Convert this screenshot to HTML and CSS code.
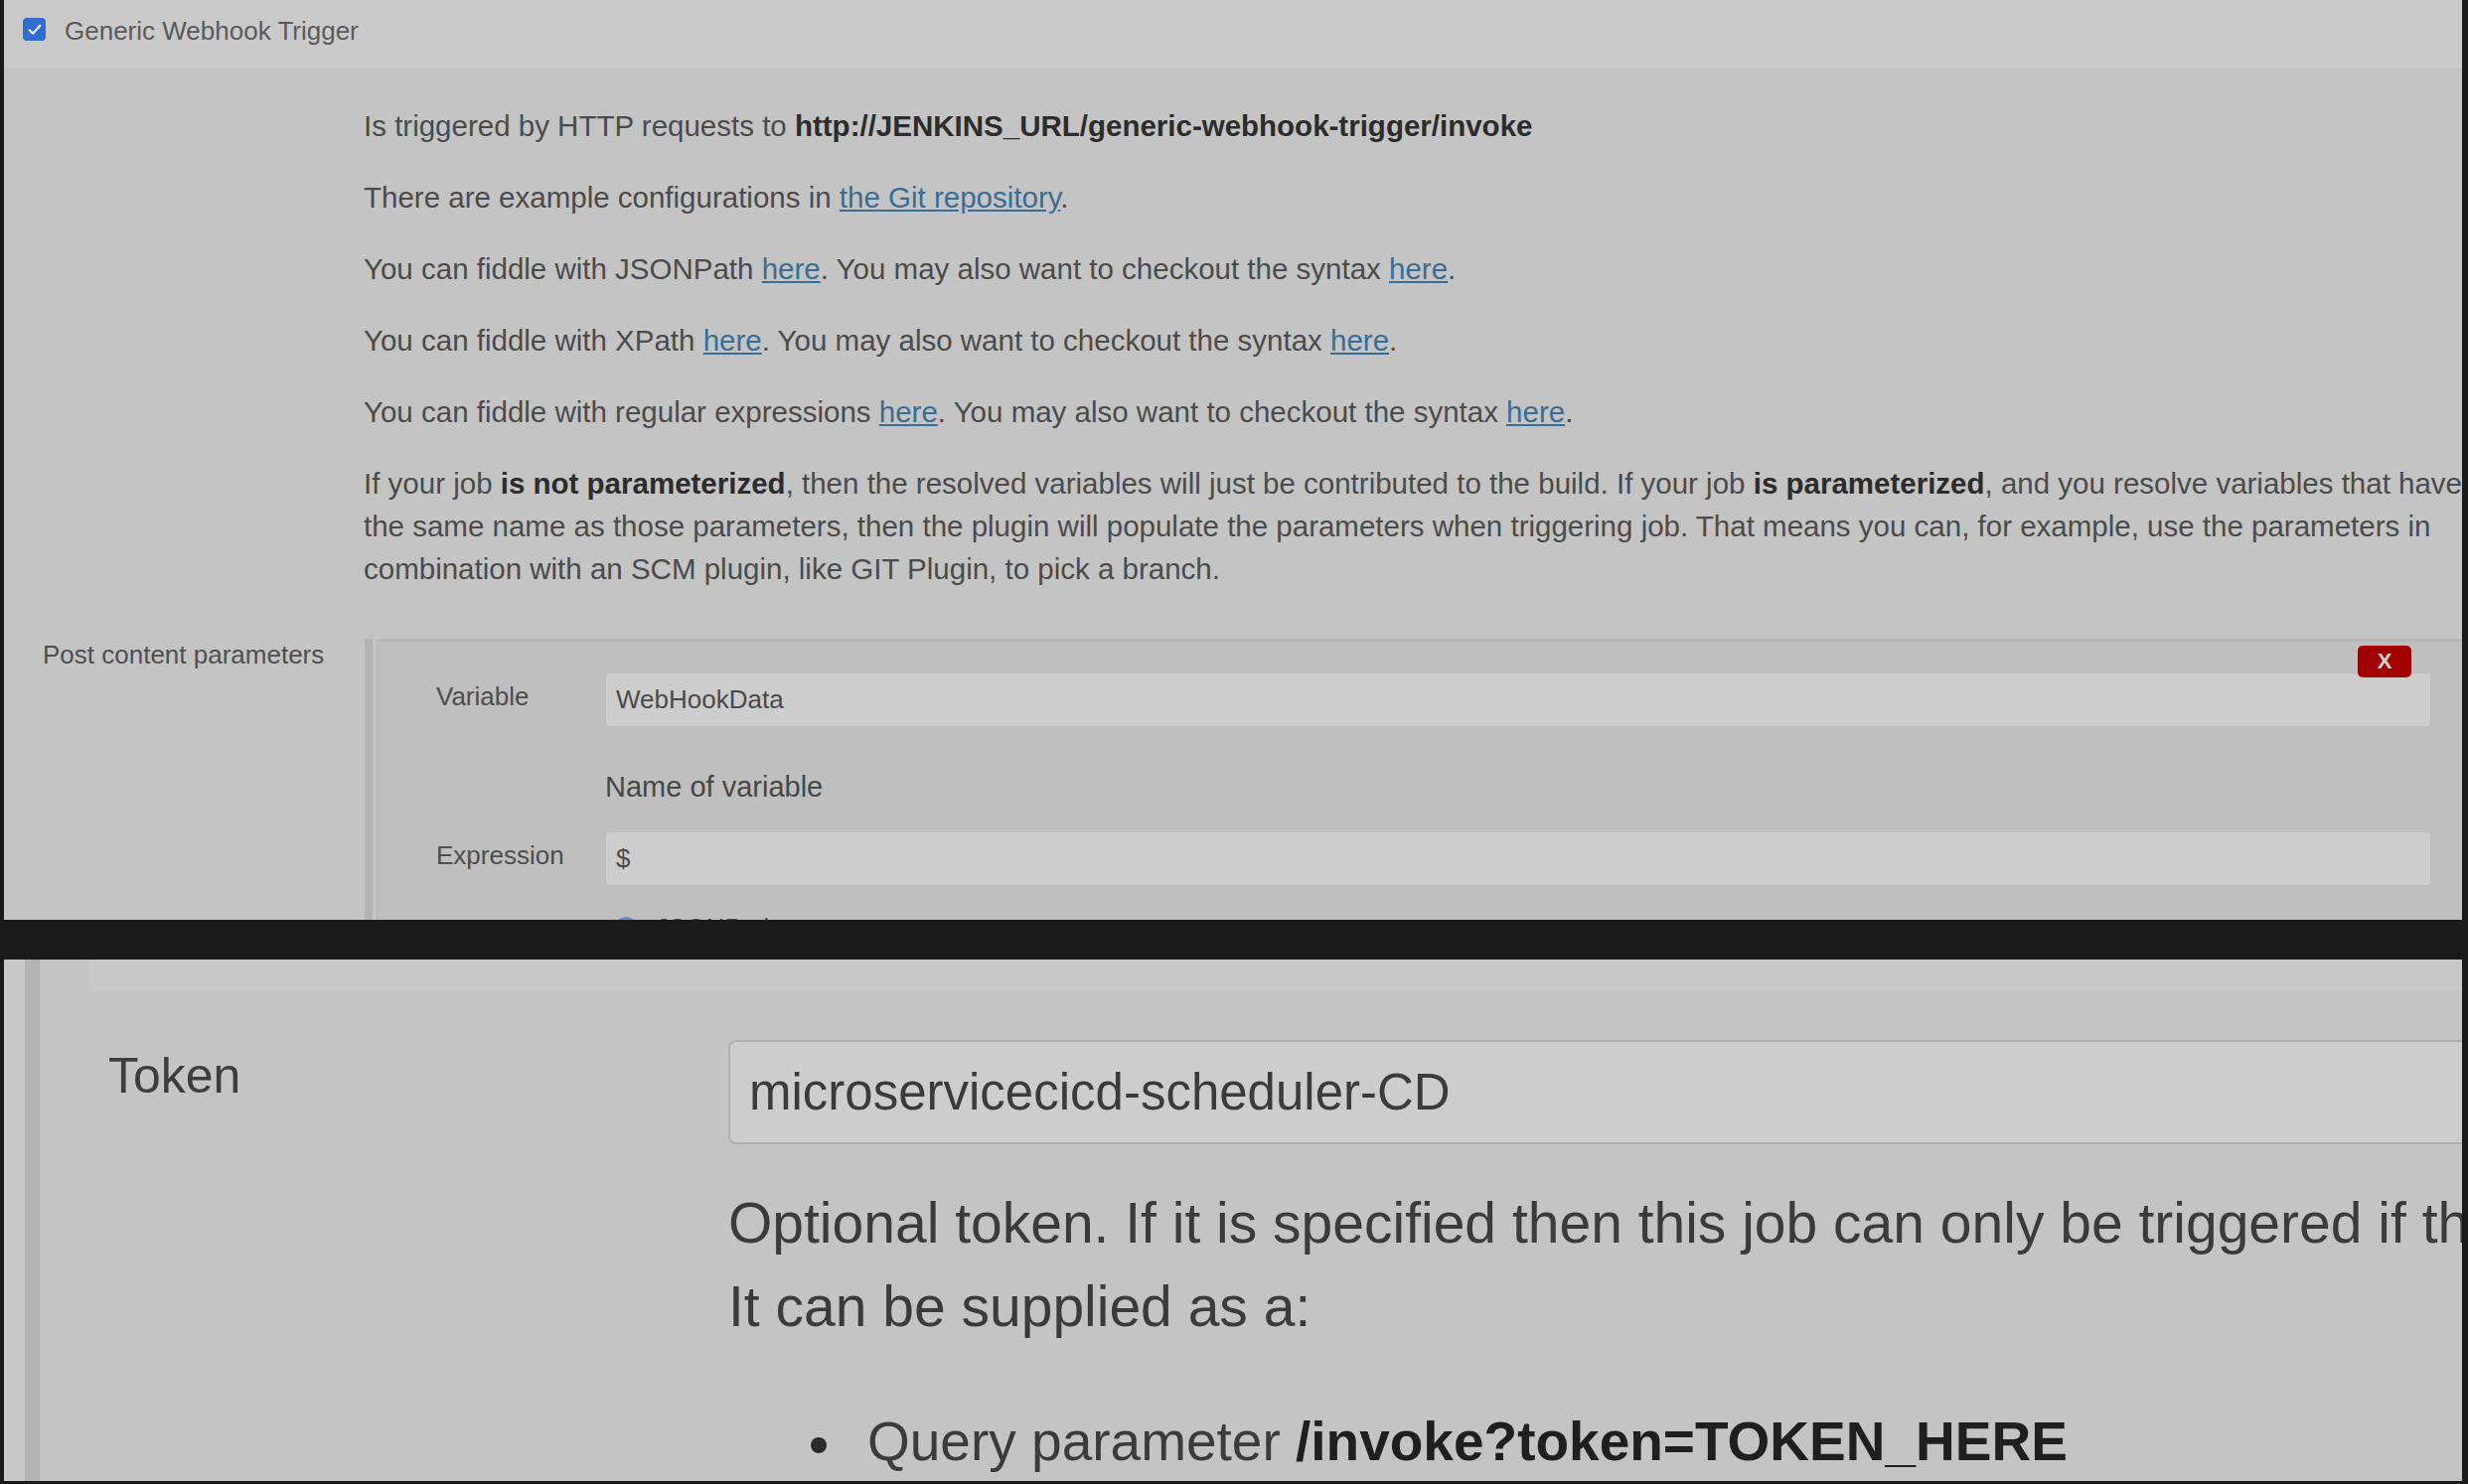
FILE: index.html
```html
<!DOCTYPE html>
<html lang="en">
<head>
<meta charset="utf-8">
<title>Generic Webhook Trigger</title>
<link rel="stylesheet" href="styles.css">
</head>
<body>
<div class="frame">
  <section class="panel panel-top">
    <div class="section-header">
      <span class="checkbox"><svg viewBox="0 0 24 24" width="18" height="18"><path d="M5 12.5l4.5 4.5L19 6.5" fill="none" stroke="#e4e4e4" stroke-width="3.2" stroke-linecap="round" stroke-linejoin="round"/></svg></span>
      <span class="section-title">Generic Webhook Trigger</span>
    </div>
    <div class="section-body">
      <div class="help">
        <p>Is triggered by HTTP requests to <b>http://JENKINS_URL/generic-webhook-trigger/invoke</b></p>
        <p>There are example configurations in <a href="#">the Git repository</a>.</p>
        <p>You can fiddle with JSONPath <a href="#">here</a>. You may also want to checkout the syntax <a href="#">here</a>.</p>
        <p>You can fiddle with XPath <a href="#">here</a>. You may also want to checkout the syntax <a href="#">here</a>.</p>
        <p>You can fiddle with regular expressions <a href="#">here</a>. You may also want to checkout the syntax <a href="#">here</a>.</p>
        <p class="last">If your job <b>is not parameterized</b>, then the resolved variables will just be contributed to the build. If your job <b>is parameterized</b>, and you resolve variables that have<br>the same name as those parameters, then the plugin will populate the parameters when triggering job. That means you can, for example, use the parameters in<br>combination with an SCM plugin, like GIT Plugin, to pick a branch.</p>
      </div>
      <div class="param-row">
        <div class="param-label">Post content parameters</div>
        <div class="repeated">
          <div class="repeated-bar"></div>
          <div class="repeated-chunk">
            <button class="delete-btn" type="button">X</button>
            <div class="field-row">
              <div class="field-label">Variable</div>
              <div class="input">WebHookData</div>
            </div>
            <div class="field-help">Name of variable</div>
            <div class="field-row">
              <div class="field-label">Expression</div>
              <div class="input">$</div>
            </div>
            <div class="radio-row">
              <span class="radio"></span>
              <span class="radio-label">JSONPath</span>
            </div>
          </div>
        </div>
      </div>
    </div>
  </section>

  <section class="panel panel-bottom">
    <div class="strip-light"></div>
    <div class="strip-dark"></div>
    <div class="bottom-content">
      <div class="band"></div>
      <div class="token-row">
        <div class="token-label">Token</div>
        <div class="token-field">
          <div class="token-input">microservicecicd-scheduler-CD</div>
          <div class="token-help">
            <p>Optional token. If it is specified then this job can only be triggered if that token is supplied when invoking.</p>
            <p>It can be supplied as a:</p>
            <ul>
              <li>Query parameter <b>/invoke?token=TOKEN_HERE</b></li>
            </ul>
          </div>
        </div>
      </div>
    </div>
  </section>
</div>
</body>
</html>
```

FILE: styles.css
```css
html, body {
  margin: 0;
  padding: 0;
}

body {
  background: #1a1a1a;
  font-family: "Liberation Sans", Arial, sans-serif;
  color: #4b4b4b;
}

.frame {
  width: 2484px;
  height: 1494px;
  box-sizing: border-box;
  padding: 0 6px 3px 4px;
  display: flex;
  flex-direction: column;
  gap: 40px;
}

.panel {
  background: #c4c4c4;
  overflow: hidden;
}

.panel-top {
  height: 926px;
  flex: none;
}

/* ---------- header ---------- */
.section-header {
  height: 68px;
  box-sizing: border-box;
  background: #cacaca;
  display: flex;
  align-items: flex-start;
  padding: 15px 0 0 19px;
  gap: 19px;
}

.checkbox {
  width: 23px;
  height: 23px;
  margin-top: 3px;
  border-radius: 4px;
  background: #2f6dd0;
  display: flex;
  align-items: center;
  justify-content: center;
}

.section-title {
  font-size: 26px;
  line-height: 32px;
  color: #5a5a5a;
}

/* ---------- help text ---------- */
.section-body {
  padding-top: 37px;
}

.help {
  padding-left: 362px;
  font-size: 29.5px;
  color: #4b4b4b;
}

.help p {
  margin: 0 0 29px;
  line-height: 43px;
  white-space: nowrap;
}

.help p.last {
  margin-bottom: 49px;
}

.help b {
  color: #2c2c2c;
}

.help a {
  color: #386d95;
  text-decoration: underline;
}

/* ---------- post content parameters ---------- */
.param-row {
  display: flex;
}

.param-label {
  flex: none;
  width: 324px;
  padding-left: 39px;
  font-size: 26px;
  line-height: 32px;
  color: #4f4f4f;
}

.repeated {
  flex: 1;
  display: flex;
  gap: 4px;
}

.repeated-bar {
  width: 8px;
  flex: none;
  background: #b3b3b3;
}

.repeated-chunk {
  flex: 1;
  position: relative;
  background: #bfbfbf;
  border-top: 3px solid #b8b8b8;
  border-left: 2px solid #b9b9b9;
  padding: 31px 31px 40px 0;
}

.delete-btn {
  position: absolute;
  top: 4px;
  right: 51px;
  width: 54px;
  height: 32px;
  border: none;
  border-radius: 5px;
  background: #a30000;
  color: #d2d2d2;
  font-family: "Liberation Sans", Arial, sans-serif;
  font-weight: bold;
  font-size: 22px;
  line-height: 32px;
  padding: 0;
  z-index: 2;
}

.field-row {
  display: flex;
  align-items: flex-start;
}

.field-label {
  flex: none;
  width: 170px;
  padding-left: 58px;
  margin-top: 8px;
  font-size: 26px;
  line-height: 32px;
  color: #4d4d4d;
}

.input {
  flex: 1;
  height: 55px;
  box-sizing: border-box;
  background: #cdcdcd;
  border: 1px solid #bcbcbc;
  border-radius: 4px;
  padding-left: 10px;
  display: flex;
  align-items: center;
  font-size: 26px;
  color: #4a4a4a;
}

.field-help {
  margin-left: 228px;
  padding: 39px 0 23px;
  font-size: 29px;
  line-height: 43px;
  color: #474747;
}

.radio-row {
  margin: 27px 0 0 237px;
  display: flex;
  align-items: center;
  gap: 18px;
}

.radio {
  width: 24px;
  height: 24px;
  border-radius: 50%;
  background: #5a8fd8;
}

.radio-label {
  font-size: 26px;
  color: #4d4d4d;
}

/* ---------- bottom (zoomed) panel ---------- */
.panel-bottom {
  flex: 1;
  display: flex;
}

.strip-light {
  width: 21px;
  flex: none;
  background: #c8c8c8;
}

.strip-dark {
  width: 15px;
  flex: none;
  background: #b3b3b3;
}

.bottom-content {
  flex: 1;
  min-width: 0;
}

.band {
  margin-left: 50px;
  height: 32px;
  background: #c8c8c8;
}

.token-row {
  display: flex;
  align-items: flex-start;
  margin-top: 49px;
}

.token-label {
  flex: none;
  width: 624px;
  padding-left: 69px;
  margin-top: 6px;
  font-size: 50px;
  line-height: 60px;
  color: #3d3d3d;
}

.token-field {
  flex: 1;
  min-width: 0;
}

.token-input {
  height: 105px;
  box-sizing: border-box;
  margin-right: -40px;
  background: #cdcdcd;
  border: 2px solid #afafaf;
  border-radius: 8px;
  padding-left: 19px;
  display: flex;
  align-items: center;
  font-size: 51px;
  color: #3b3b3b;
}

.token-help {
  margin-top: 37px;
  font-size: 57px;
  line-height: 84px;
  color: #3b3b3b;
  white-space: nowrap;
}

.token-help p {
  margin: 0;
}

.token-help ul {
  list-style: none;
  margin: 52px 0 0;
  padding-left: 83px;
  font-size: 55px;
}

.token-help li::before {
  content: "";
  display: inline-block;
  width: 16px;
  height: 16px;
  border-radius: 50%;
  background: #2b2b2b;
  margin-right: 41px;
  vertical-align: middle;
}

.token-help b {
  color: #1f1f1f;
}
```
